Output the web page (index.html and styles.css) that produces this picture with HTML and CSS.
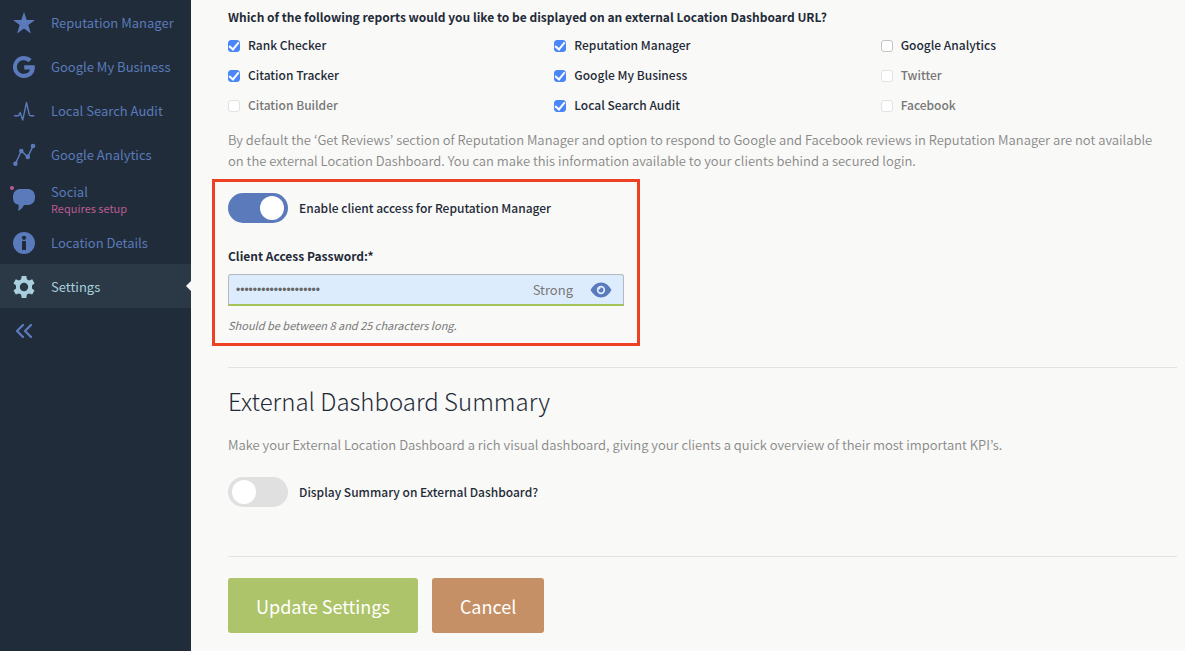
FILE: index.html
```html
<!DOCTYPE html>
<html lang="en">
<head>
    <meta charset="UTF-8">
    <meta name="viewport" content="width=device-width, initial-scale=1.0">
    <title>Location Dashboard Settings</title>
    <link rel="stylesheet" href="styles.css">
</head>
<body>
    <!-- Sidebar -->
    <nav class="sidebar">
        <a class="nav-item" href="#">
            <svg class="icon" viewBox="0 0 24 24"><path d="M12 1l2.7 8.1H23l-6.7 4.9 2.6 8.5L12 17.4l-6.9 5.1 2.6-8.5L1 9.1h8.3z"/></svg>
            <span>Reputation Manager</span>
        </a>
        <a class="nav-item" href="#">
            <svg class="icon" viewBox="0 0 24 24"><path d="M12.2 10.2h10.6c.9 7.6-4 12.8-10.8 12.8A11 11 0 1 1 19.6 4.1l-3.1 3.1A6.8 6.8 0 1 0 12 18.8c3 0 5.4-1.7 6.1-4.4h-5.9z"/></svg>
            <span>Google My Business</span>
        </a>
        <a class="nav-item" href="#">
            <svg class="icon" viewBox="0 0 24 24"><path class="line thin" d="M2.5 16.8h4l1.6-3.3 2.6 7.600L14.500 3.500l2.900 12.700 1.600.6h2.700"/></svg>
            <span>Local Search Audit</span>
        </a>
        <a class="nav-item" href="#">
            <svg class="icon" viewBox="0 0 24 24"><path class="line" d="M3.4 20.7L9.3 8l6.5 5.9L21 3"/><circle cx="3.4" cy="20.7" r="2.3"/><circle cx="9.3" cy="8" r="2.3"/><circle cx="15.8" cy="13.9" r="2.3"/><circle cx="21" cy="3" r="2.3"/></svg>
            <span>Google Analytics</span>
        </a>
        <a class="nav-item" href="#">
            <svg class="icon" viewBox="0 0 24 24"><path d="M8 2h8a7 7 0 0 1 7 7v2a7 7 0 0 1-7 7h-4c-1.300 2.800-3.300 4.900-6.200 6 .8-1.900 1-4 .9-6.100A7 7 0 0 1 1 11V9a7 7 0 0 1 7-7z"/><circle class="alert" cx="0" cy="1" r="2"/></svg>
            <span>Social<small>Requires setup</small></span>
        </a>
        <a class="nav-item" href="#">
            <svg class="icon" viewBox="0 0 24 24"><path fill-rule="evenodd" d="M12 1a11 11 0 1 1 0 22 11 11 0 0 1 0-22zm0 3.700a2.100 2.100 0 1 0 0 4.200 2.100 2.100 0 0 0 0-4.200zM10 10v9h4v-9z"/></svg>
            <span>Location Details</span>
        </a>
        <a class="nav-item active" href="#">
            <svg class="icon" viewBox="0 0 24 24"><path fill-rule="evenodd" d="M9.700 1h4.600l.6 3.300 2.100 1.200 3.200-1.200 2.300 4-2.500 2.200v2.900l2.500 2.200-2.300 4-3.200-1.200-2.100 1.200-.6 3.400H9.700l-.6-3.400L7 18.400l-3.200 1.200-2.300-4L4 13.400v-2.900L1.500 8.300l2.300-4L7 5.500l2.100-1.200zM12 7.800a4.200 4.200 0 1 0 0 8.400 4.200 4.200 0 0 0 0-8.400z"/></svg>
            <span>Settings</span>
        </a>
        <button class="nav-item collapse" type="button" aria-label="Collapse menu">
            <svg class="icon" viewBox="0 0 24 24"><path class="line thick" d="M11 6l-6 6 6 6M19 6l-6 6 6 6"/></svg>
        </button>
    </nav>

    <main class="content">
        <form>
            <!-- Reports -->
            <fieldset class="reports">
                <legend>Which of the following reports would you like to be displayed on an external Location Dashboard URL?</legend>
                <div class="report-grid">
                    <label><input class="check" type="checkbox" checked> Rank Checker</label>
                    <label><input class="check" type="checkbox" checked> Reputation Manager</label>
                    <label><input class="check" type="checkbox"> Google Analytics</label>
                    <label><input class="check" type="checkbox" checked> Citation Tracker</label>
                    <label><input class="check" type="checkbox" checked> Google My Business</label>
                    <label class="disabled"><input class="check" type="checkbox" disabled> Twitter</label>
                    <label class="disabled"><input class="check" type="checkbox" disabled> Citation Builder</label>
                    <label><input class="check" type="checkbox" checked> Local Search Audit</label>
                    <label class="disabled"><input class="check" type="checkbox" disabled> Facebook</label>
                </div>
            </fieldset>
            <p class="help">By default the ‘Get Reviews’ section of Reputation Manager and option to respond to Google and Facebook reviews in Reputation Manager are not available on the external Location Dashboard. You can make this information available to your clients behind a secured login.</p>

            <!-- Client access -->
            <section class="client-access">
                <label class="toggle-row"><input class="toggle" type="checkbox" checked> Enable client access for Reputation Manager</label>
                <label class="field-label" for="password">Client Access Password:*</label>
                <div class="password-field">
                    <input id="password" type="password" value="abcdefghijklmnopqrst">
                    <span class="strength">Strong</span>
                    <button class="reveal" type="button" aria-label="Show password">
                        <svg viewBox="0 0 22 16"><path fill-rule="evenodd" d="M11 0.500c4.500 0 8 3 10.500 7.500-2.500 4.500-6 7.500-10.500 7.500S3 12.500.5 8C3 3.500 6.500.5 11 .5zM11 3.800a4.200 4.200 0 1 0 0 8.400 4.200 4.200 0 0 0 0-8.400z"/><path d="M11 5.600a2.400 2.400 0 1 1-2.300 1.700 1.300 1.300 0 0 0 1.700-1.600z"/></svg>
                    </button>
                </div>
                <p class="hint">Should be between 8 and 25 characters long.</p>
            </section>

            <!-- Dashboard summary -->
            <section class="summary">
                <h2>External Dashboard Summary</h2>
                <p class="help">Make your External Location Dashboard a rich visual dashboard, giving your clients a quick overview of their most important KPI’s.</p>
                <label class="toggle-row"><input class="toggle" type="checkbox"> Display Summary on External Dashboard?</label>
            </section>

            <div class="actions">
                <button class="btn btn-update" type="submit">Update Settings</button>
                <button class="btn btn-cancel" type="button">Cancel</button>
            </div>
        </form>
    </main>
</body>
</html>
```
FILE: styles.css
```css
* {
    box-sizing: border-box;
}
body {
    display: flex;
    min-height: 100vh;
    margin: 0;
    background-color: #f9f9f7;
    color: #1f2b38;
    font-family: "Noto Sans CJK KR", "Open Sans", sans-serif;
    font-size: 12px;
    line-height: 20px;
}
input,
button {
    font-family: inherit;
}

/* Sidebar */
.sidebar {
    flex: 0 0 191px;
    background-color: #202c39;
}
.nav-item {
    position: relative;
    display: flex;
    align-items: center;
    gap: 15px;
    width: 100%;
    height: 44px;
    padding: 2px 12px 0;
    color: #5b7abb;
    font-size: 13px;
    line-height: 18px;
    text-decoration: none;
    white-space: nowrap;
}
.nav-item small {
    display: block;
    color: #bb5b93;
    font-size: 11px;
    line-height: 14px;
}
.nav-item.active {
    background-color: #2b3947;
    color: #a9cfdd;
}
.nav-item.active::after {
    content: "";
    position: absolute;
    top: 17px;
    right: 0;
    border: 5px solid transparent;
    border-left: 0;
    border-right-color: #f9f9f7;
}
.collapse {
    border: 0;
    background: none;
    cursor: pointer;
}
.icon {
    flex: none;
    width: 24px;
    height: 24px;
    fill: currentColor;
    overflow: visible;
}
.icon .line {
    fill: none;
    stroke: currentColor;
    stroke-width: 1.5;
    stroke-linejoin: round;
    stroke-linecap: round;
}
.icon .thin {
    stroke-width: 1.4;
}
.icon .thick {
    stroke-width: 2.4;
}
.icon .alert {
    fill: #bb5b93;
}

/* Content */
.content {
    flex: 1;
    min-width: 0;
    padding: 7px 8px 18px 37px;
}
.reports {
    margin: 0;
    padding: 0;
    border: 0;
}
.reports legend {
    padding: 0;
    font-weight: bold;
}
.report-grid {
    display: grid;
    grid-template-columns: repeat(3, 1fr);
    gap: 10px 30px;
    margin-top: 8px;
    font-weight: 500;
}
.report-grid label {
    display: flex;
    align-items: center;
    gap: 8px;
}
.report-grid .disabled {
    color: #777;
}
.check {
    appearance: none;
    display: grid;
    place-items: center;
    width: 12px;
    height: 12px;
    margin: 2px 0 0;
    border: 1px solid #c4c4c4;
    border-radius: 3px;
    background-color: #fff;
}
.check:disabled {
    border-color: #e2e2e2;
}
.check:checked {
    border-color: #4a86f7;
    background-color: #4a86f7;
}
.check:checked::before {
    content: "";
    width: 4px;
    height: 8px;
    border: solid #fff;
    border-width: 0 2px 2px 0;
    transform: translateY(-1px) rotate(40deg);
}
.help {
    margin: 14px 0 0;
    padding-right: 14px;
    color: #888;
    font-size: 13px;
    font-weight: 350;
    line-height: 21px;
}

/* Client access */
.client-access {
    max-width: 428px;
    margin: 8px 0 0 -16px;
    padding: 11px 13px 8px;
    border: 3px solid #ee4023;
}
.toggle-row {
    display: flex;
    align-items: center;
    gap: 11px;
    font-weight: 500;
}
.toggle {
    appearance: none;
    display: flex;
    width: 60px;
    height: 30px;
    margin: 0;
    padding: 3px 4px;
    border-radius: 15px;
    background-color: #e0e0e0;
}
.toggle::before {
    content: "";
    width: 24px;
    height: 24px;
    border-radius: 50%;
    background-color: #fff;
}
.toggle:checked {
    justify-content: flex-end;
    background-color: #5b7abb;
}
.field-label {
    display: block;
    margin-top: 23px;
    font-weight: bold;
}
.password-field {
    display: flex;
    align-items: center;
    height: 32px;
    margin-top: 8px;
    padding: 0 11px 0 7px;
    border: 1px solid #b5b9bd;
    border-bottom: 2px solid #a4c45a;
    border-radius: 3px 3px 0 0;
    background-color: #ddecfd;
}
.password-field input {
    flex: 1;
    min-width: 0;
    padding: 0;
    border: 0;
    outline: 0;
    background: none;
    color: #666;
    font-family: "Liberation Sans", sans-serif;
    font-size: 12px;
}
.strength {
    color: #777;
    font-size: 13px;
}
.reveal {
    display: flex;
    margin-left: 17px;
    padding: 0;
    border: 0;
    background: none;
    cursor: pointer;
}
.reveal svg {
    width: 22px;
    height: 16px;
    fill: #5b7abb;
}
.hint {
    margin: 9px 0 0;
    color: #777;
    font-size: 11px;
    font-style: italic;
}

/* Dashboard summary */
.summary {
    margin-top: 21px;
    padding: 15px 0 49px;
    border: solid #e2e2e2;
    border-width: 1px 0;
}
.summary h2 {
    margin: 0;
    font-size: 24px;
    font-weight: 300;
    line-height: 36px;
}
.summary .help {
    margin-top: 15px;
}
.summary .toggle-row {
    margin-top: 22px;
}

/* Buttons */
.actions {
    display: flex;
    gap: 14px;
    margin-top: 21px;
}
.btn {
    height: 55px;
    padding: 0 28px;
    border: 0;
    border-radius: 3px;
    color: #fff;
    font-size: 18px;
    font-weight: 400;
    cursor: pointer;
}
.btn-update {
    background-color: #adc46a;
}
.btn-cancel {
    background-color: #c69066;
}
```
